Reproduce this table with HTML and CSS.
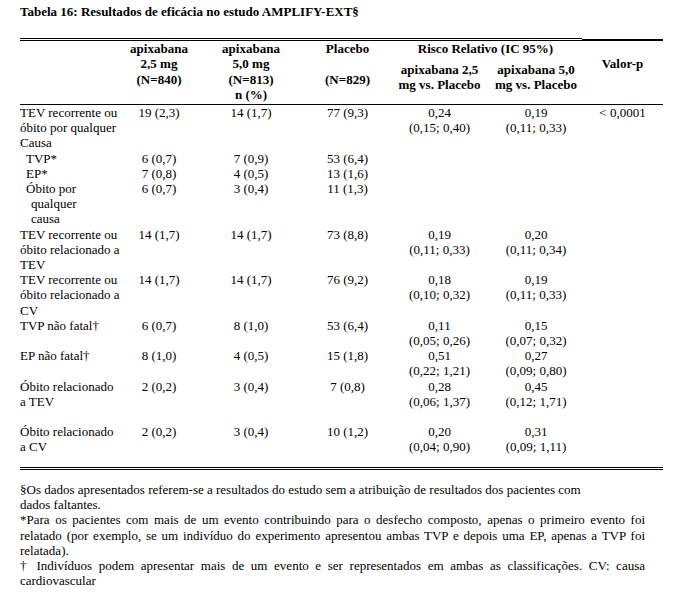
FILE: index.html
```html
<!DOCTYPE html>
<html lang="pt">
<head>
<meta charset="utf-8">
<title>Tabela 16</title>
<link rel="stylesheet" href="styles.css">
</head>
<body>
<div class="page">
  <p class="title">Tabela 16: Resultados de eficácia no estudo AMPLIFY-EXT§</p>
  <table class="results">
    <colgroup>
      <col class="c-label">
      <col class="c-a25">
      <col class="c-a50">
      <col class="c-plc">
      <col class="c-rr1">
      <col class="c-rr2">
      <col class="c-p">
    </colgroup>
    <thead>
      <tr>
        <th rowspan="2" class="top bottom"></th>
        <th rowspan="2" class="top bottom">apixabana<br>2,5 mg<br>(N=840)</th>
        <th rowspan="2" class="top bottom">apixabana<br>5,0 mg<br>(N=813)<br>n (%)</th>
        <th rowspan="2" class="top bottom">Placebo<br><br>(N=829)</th>
        <th colspan="2" class="top">Risco Relativo (IC 95%)</th>
        <th rowspan="2" class="top-thick bottom"><br>Valor-p</th>
      </tr>
      <tr>
        <th class="bottom">apixabana 2,5<br>mg vs. Placebo</th>
        <th class="bottom">apixabana 5,0<br>mg vs. Placebo</th>
      </tr>
    </thead>
    <tbody>
      <tr>
        <td class="label">TEV recorrente ou<br>óbito por qualquer<br>Causa</td>
        <td>19 (2,3)</td>
        <td>14 (1,7)</td>
        <td>77 (9,3)</td>
        <td>0,24<br>(0,15; 0,40)</td>
        <td>0,19<br>(0,11; 0,33)</td>
        <td>&lt; 0,0001</td>
      </tr>
      <tr>
        <td class="label sub">TVP*</td>
        <td>6 (0,7)</td>
        <td>7 (0,9)</td>
        <td>53 (6,4)</td>
        <td></td><td></td><td></td>
      </tr>
      <tr>
        <td class="label sub">EP*</td>
        <td>7 (0,8)</td>
        <td>4 (0,5)</td>
        <td>13 (1,6)</td>
        <td></td><td></td><td></td>
      </tr>
      <tr>
        <td class="label sub">Óbito por<br><span class="hang">qualquer</span><br><span class="hang">causa</span></td>
        <td>6 (0,7)</td>
        <td>3 (0,4)</td>
        <td>11 (1,3)</td>
        <td></td><td></td><td></td>
      </tr>
      <tr>
        <td class="label">TEV recorrente ou<br>óbito relacionado a<br>TEV</td>
        <td>14 (1,7)</td>
        <td>14 (1,7)</td>
        <td>73 (8,8)</td>
        <td>0,19<br>(0,11; 0,33)</td>
        <td>0,20<br>(0,11; 0,34)</td>
        <td></td>
      </tr>
      <tr>
        <td class="label">TEV recorrente ou<br>óbito relacionado a<br>CV</td>
        <td>14 (1,7)</td>
        <td>14 (1,7)</td>
        <td>76 (9,2)</td>
        <td>0,18<br>(0,10; 0,32)</td>
        <td>0,19<br>(0,11; 0,33)</td>
        <td></td>
      </tr>
      <tr>
        <td class="label">TVP não fatal†</td>
        <td>6 (0,7)</td>
        <td>8 (1,0)</td>
        <td>53 (6,4)</td>
        <td>0,11<br>(0,05; 0,26)</td>
        <td>0,15<br>(0,07; 0,32)</td>
        <td></td>
      </tr>
      <tr>
        <td class="label">EP não fatal†</td>
        <td>8 (1,0)</td>
        <td>4 (0,5)</td>
        <td>15 (1,8)</td>
        <td>0,51<br>(0,22; 1,21)</td>
        <td>0,27<br>(0,09; 0,80)</td>
        <td></td>
      </tr>
      <tr>
        <td class="label">Óbito relacionado<br>a TEV<br>&nbsp;</td>
        <td>2 (0,2)</td>
        <td>3 (0,4)</td>
        <td>7 (0,8)</td>
        <td>0,28<br>(0,06; 1,37)</td>
        <td>0,45<br>(0,12; 1,71)</td>
        <td></td>
      </tr>
      <tr class="last">
        <td class="label">Óbito relacionado<br>a CV</td>
        <td>2 (0,2)</td>
        <td>3 (0,4)</td>
        <td>10 (1,2)</td>
        <td>0,20<br>(0,04; 0,90)</td>
        <td>0,31<br>(0,09; 1,11)</td>
        <td></td>
      </tr>
    </tbody>
  </table>
  <div class="notes">
    <p class="note">
      <span class="ln">§Os dados apresentados referem-se a resultados do estudo sem a atribuição de resultados dos pacientes com</span>
      <span class="ln">dados faltantes.</span>
    </p>
    <p class="note">
      <span class="ln just">*Para os pacientes com mais de um evento contribuindo para o desfecho composto, apenas o primeiro evento foi</span>
      <span class="ln just">relatado (por exemplo, se um indivíduo do experimento apresentou ambas TVP e depois uma EP, apenas a TVP foi</span>
      <span class="ln">relatada).</span>
    </p>
    <p class="note">
      <span class="ln just">† Indivíduos podem apresentar mais de um evento e ser representados em ambas as classificações. CV: causa</span>
      <span class="ln">cardiovascular</span>
    </p>
  </div>
</div>
</body>
</html>
```

FILE: styles.css
```css
body {
  margin: 0;
  background: #fff;
  color: #000;
  font-family: "Liberation Serif", "Times New Roman", serif;
  font-size: 13px;
  line-height: 15.2px;
}

.page {
  padding: 4px 15px 0 20px;
}

.title {
  margin: 0 0 19px;
  font-weight: bold;
}

.results {
  border-collapse: separate;
  border-spacing: 0;
  table-layout: fixed;
  width: 643px;
}

.c-label { width: 102px; }
.c-a25 { width: 74px; }
.c-a50 { width: 110px; }
.c-plc { width: 83px; }
.c-rr1 { width: 101px; }
.c-rr2 { width: 92px; }
.c-p { width: 81px; }

.results th {
  font-weight: bold;
  text-align: center;
  vertical-align: top;
  padding: 0;
}

.results th.top {
  border-top: 3px double #000;
}

.results th.top-thick {
  border-top: 3px solid transparent;
  background: linear-gradient(#000, #000) 0 1px / 100% 2px no-repeat;
  background-origin: border-box;
}

.results th.bottom {
  border-bottom: 1px solid #000;
  padding-bottom: 2px;
}

.results td {
  padding: 0;
  text-align: center;
  vertical-align: top;
}

.results td.label {
  text-align: left;
  padding-left: 0;
}

.results td.sub {
  padding-left: 6px;
}

.hang {
  padding-left: 5px;
}

.results tr.last td {
  padding-bottom: 12px;
  border-bottom: 3px double #000;
}

.notes {
  width: 625px;
  margin-top: 12px;
  line-height: 15.3px;
}

.note {
  margin: 0;
}

.ln {
  display: block;
}

.ln.just {
  text-align: justify;
  text-align-last: justify;
}
```
